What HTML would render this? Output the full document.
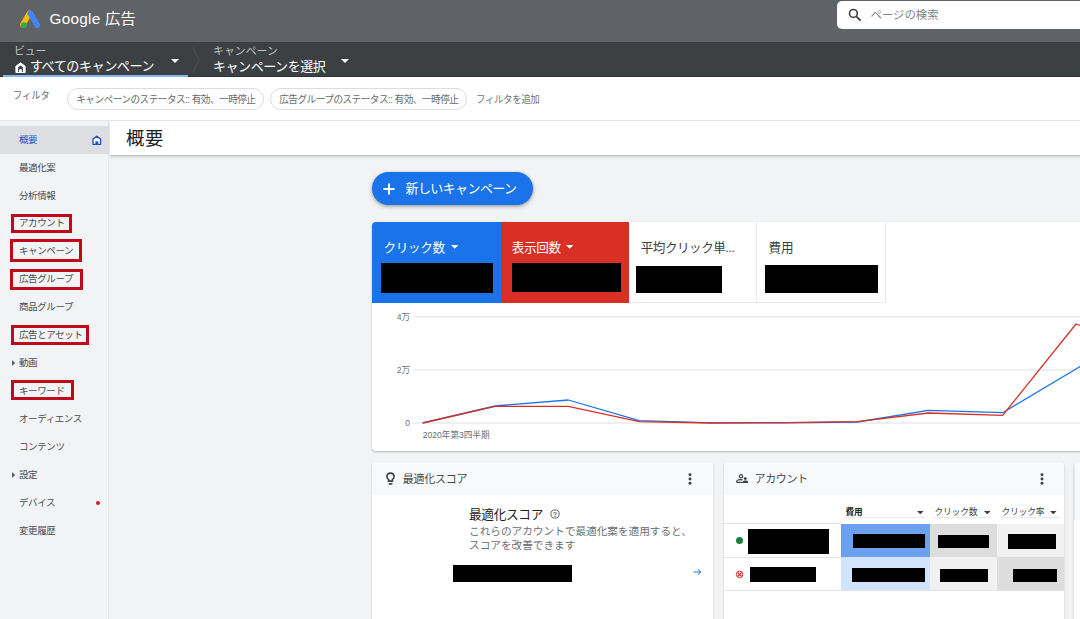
<!DOCTYPE html>
<html lang="ja"><head><meta charset="utf-8">
<style>
*{box-sizing:border-box;margin:0;padding:0}
html,body{width:1080px;height:619px;overflow:hidden;background:#f1f3f4}
body{font-family:"Liberation Sans","Noto Sans CJK JP",sans-serif;position:relative;color:#3c4043}
.abs{position:absolute}
#top{left:0;top:0;width:1080px;height:42px;background:#5f6368}
#nav{left:0;top:42px;width:1080px;height:35px;background:#3c4043;border-bottom:1px solid #303336}
#filter{left:0;top:77px;width:1080px;height:44px;background:#fff;border-bottom:1px solid #e3e5e7}
#side{left:0;top:121px;width:109px;height:498px;background:#f1f3f4;border-right:1px solid #e6e8ea}
#title{left:109.5px;top:121px;width:971px;height:34.3px;background:#fff;box-shadow:0 1px 0 #bfc2c5,0 2px 2px rgba(60,64,67,.18)}
.t{position:absolute;white-space:nowrap;line-height:1}
.blk{position:absolute;background:#000}
.chip{height:22px;border:1px solid #dadce0;border-radius:11px;font-size:10px;color:#666a6f;line-height:21.6px;text-align:center;white-space:nowrap;letter-spacing:-0.55px;background:#fff}
.chip span{display:inline-block;transform:scaleX(.965)}
.si{left:19px;font-size:9.5px;letter-spacing:-0.4px}
.rb{position:absolute;border:3px solid #c00a1b}
</style></head><body>
<div id="top" class="abs">
<svg class="abs" style="left:20.4px;top:9.6px" width="21" height="19.2" viewBox="0 0 23 21">
<path d="M1.2 15.2 L8.6 2.4" stroke="#fbbc04" stroke-width="6" stroke-linecap="round" transform="translate(1.8,1)"/>
<path d="M10.5 3.3 L17.9 16.1" stroke="#4285f4" stroke-width="6.4" stroke-linecap="round" transform="translate(1,0.6)"/>
<circle cx="4.3" cy="16.6" r="3.3" fill="#34a853"/>
</svg>
<div class="t" style="left:49.6px;top:11.3px;font-size:15.3px;color:#fff;letter-spacing:0.25px">Google 広告</div>
<div class="abs" style="left:837px;top:1.4px;width:260px;height:27.8px;background:#fff;border-radius:5px"></div>
<svg class="abs" style="left:848px;top:8px" width="14" height="14" viewBox="0 0 14 14"><circle cx="5.4" cy="5.4" r="3.9" fill="none" stroke="#3c4043" stroke-width="1.6"/><path d="M8.3 8.3 L12.6 12.6" stroke="#3c4043" stroke-width="1.8"/></svg>
<div class="t" style="left:870.5px;top:10px;font-size:11.4px;color:#80868b">ページの検索</div>
</div>
<div id="nav" class="abs">
<div class="t" style="left:14px;top:3.7px;font-size:10.9px;color:#bdc1c6;letter-spacing:-0.1px">ビュー</div>
<svg class="abs" style="left:15.3px;top:20px" width="11" height="11.4" viewBox="0 0 11 11.4"><path d="M0.9 10.6 V4.2 L5.5 0.8 L10.1 4.2 V10.6 Z" fill="#fff" stroke="#fff" stroke-width="1" stroke-linejoin="round"/><path d="M3.1 10 V5.3 L5.5 3.5 L7.9 5.3 V10 H6.9 V7.2 H4.1 V10Z" fill="#3c4043"/></svg>
<div class="t" style="left:29.9px;top:18.2px;font-size:13.1px;color:#fff;letter-spacing:-0.47px">すべてのキャンペーン</div>
<div class="abs" style="left:170.6px;top:16.7px;border:4px solid transparent;border-top:4px solid #fff;border-bottom:0"></div>
<div class="abs" style="left:3px;top:32.5px;width:185px;height:2.5px;background:#8ab4f8"></div>
<svg class="abs" style="left:192px;top:4px" width="10" height="28" viewBox="0 0 10 28"><path d="M1 1 L7 14 L1 27" fill="none" stroke="#4a4e52" stroke-width="1"/></svg>
<div class="t" style="left:213px;top:3.6px;font-size:10.9px;color:#bdc1c6">キャンペーン</div>
<div class="t" style="left:213px;top:18.2px;font-size:13px;color:#fff;letter-spacing:-0.45px">キャンペーンを選択</div>
<div class="abs" style="left:340.6px;top:16.7px;border:4px solid transparent;border-top:4px solid #fff;border-bottom:0"></div>
</div>
<div id="filter" class="abs">
<div class="t" style="left:13.2px;top:14px;font-size:10.3px;color:#686c71;transform:scaleX(.9);transform-origin:0 0">フィルタ</div>
<div class="abs chip" style="left:67px;top:11px;width:197px"><span>キャンペーンのステータス:: 有効、一時停止</span></div>
<div class="abs chip" style="left:270px;top:11px;width:197px"><span>広告グループのステータス:: 有効、一時停止</span></div>
<div class="t" style="left:476.4px;top:18.4px;font-size:10px;color:#70757a;letter-spacing:-0.5px;transform:scaleX(.957);transform-origin:0 0">フィルタを追加</div>
</div>
<div id="side" class="abs">
<div class="abs" style="left:0;top:5px;width:109px;height:27.6px;background:#dcdee1"></div>
<div class="t si" style="top:13.5px;color:#1a56c4">概要</div>
<div class="t si" style="top:41.5px;color:#484c50">最適化案</div>
<div class="t si" style="top:69.5px;color:#484c50">分析情報</div>
<div class="t si" style="top:97.2px;color:#484c50">アカウント</div>
<div class="t si" style="top:124.7px;color:#484c50">キャンペーン</div>
<div class="t si" style="top:152.7px;color:#484c50">広告グループ</div>
<div class="t si" style="top:180.5px;color:#484c50">商品グループ</div>
<div class="t si" style="top:208.5px;color:#484c50">広告とアセット</div>
<div class="t si" style="top:236.9px;color:#484c50">動画</div>
<div class="t si" style="top:264.6px;color:#484c50">キーワード</div>
<div class="t si" style="top:293.3px;color:#484c50">オーディエンス</div>
<div class="t si" style="top:321.4px;color:#484c50">コンテンツ</div>
<div class="t si" style="top:349.0px;color:#484c50">設定</div>
<div class="t si" style="top:377.1px;color:#484c50">デバイス</div>
<div class="t si" style="top:404.7px;color:#484c50">変更履歴</div>
<svg class="abs" style="left:91.6px;top:13.9px" width="10" height="10.4" viewBox="0 0 10 10.4"><path d="M1 9.5 V4.1 L4.8 1.2 L8.6 4.1 V9.5 Z" fill="#f4f7fe" stroke="#1c4fc0" stroke-width="1.3" stroke-linejoin="round"/><rect x="3.4" y="6.4" width="2.8" height="3.4" fill="#1c4fc0"/></svg>
<svg class="abs" style="left:11.6px;top:239.4px" width="3.2" height="6" viewBox="0 0 3.2 6"><path d="M0 0L3.2 3L0 6Z" fill="#5f6368"/></svg>
<svg class="abs" style="left:11.6px;top:351.2px" width="3.2" height="6" viewBox="0 0 3.2 6"><path d="M0 0L3.2 3L0 6Z" fill="#5f6368"/></svg>
<div class="abs" style="left:96px;top:379.5px;width:4px;height:4px;border-radius:2px;background:#d01c1c"></div>
<div class="rb" style="left:11px;top:93.0px;width:61.0px;height:18.6px"></div>
<div class="rb" style="left:10.2px;top:118.3px;width:71.5px;height:22.8px"></div>
<div class="rb" style="left:10.2px;top:148.0px;width:72.7px;height:20.7px"></div>
<div class="rb" style="left:11px;top:203.9px;width:77.8px;height:19.8px"></div>
<div class="rb" style="left:11px;top:259.2px;width:62.7px;height:19.8px"></div>
</div>
<div id="title" class="abs"><div class="t" style="left:16.4px;top:8.6px;font-size:18.4px;color:#202124;letter-spacing:0.7px">概要</div></div>
<!--MAIN-->
<div class="abs" style="left:372.4px;top:172px;width:160.8px;height:33px;border-radius:17px;background:#1a73e8;box-shadow:0 1px 3px rgba(60,64,67,.4),0 2px 5px rgba(60,64,67,.2)"></div>
<svg class="abs" style="left:383px;top:183px" width="12" height="12" viewBox="0 0 12 12"><path d="M6 0.4V11.6M0.4 6H11.6" stroke="#fff" stroke-width="2"/></svg>
<div class="t" style="left:405.5px;top:182px;font-size:13px;color:#fff;letter-spacing:-0.6px">新しいキャンペーン</div>
<div class="abs" style="left:372.4px;top:222px;width:720px;height:229px;background:#fff;border-radius:4px;box-shadow:0 1px 2px rgba(60,64,67,.35);overflow:hidden">
<div class="abs" style="left:0;top:0;width:128.4px;height:80.6px;background:#1a73e8"></div>
<div class="abs" style="left:128.4px;top:0;width:128.3px;height:80.6px;background:#d93025"></div>
<div class="abs" style="left:256.7px;top:0;width:128px;height:80.6px;border-right:1px solid #e8eaed;border-bottom:1px solid #e8eaed"></div>
<div class="abs" style="left:384.7px;top:0;width:128.5px;height:80.6px;border-right:1px solid #e8eaed;border-bottom:1px solid #e8eaed"></div>
</div>
<div class="t" style="left:383.4px;top:241.8px;font-size:12.6px;color:#fff;letter-spacing:-0.3px">クリック数</div>
<svg class="abs" style="left:450.7px;top:245.3px" width="7.4" height="3.7" viewBox="0 0 7.4 3.7"><path d="M0 0H7.4L3.7 3.7Z" fill="#fff"/></svg>
<div class="t" style="left:511.7px;top:241.8px;font-size:12.6px;color:#fff;letter-spacing:-0.3px">表示回数</div>
<svg class="abs" style="left:566.2px;top:245.3px" width="7.4" height="3.7" viewBox="0 0 7.4 3.7"><path d="M0 0H7.4L3.7 3.7Z" fill="#fff"/></svg>
<div class="t" style="left:640.7px;top:241.8px;font-size:12.6px;color:#3c4043;letter-spacing:-0.5px">平均クリック単...</div>
<div class="t" style="left:768.6px;top:241.8px;font-size:12.6px;color:#3c4043;letter-spacing:-0.3px">費用</div>
<div class="blk" style="left:381.3px;top:262.9px;width:111.7px;height:30.4px"></div>
<div class="blk" style="left:511.7px;top:262.9px;width:109.4px;height:28.8px"></div>
<div class="blk" style="left:636.0px;top:266.3px;width:85.6px;height:26.4px"></div>
<div class="blk" style="left:764.7px;top:265.2px;width:113.3px;height:27.5px"></div>
<svg class="abs" style="left:372px;top:303px" width="708" height="147" viewBox="372 303 708 147">
<g stroke="#dddfe1" stroke-width="1"><path d="M413.3 316.8H1080M413.3 370H1080M413.3 423H1080"/></g>
<g font-family="'Liberation Sans','Noto Sans CJK JP',sans-serif" font-size="8.6" fill="#6a6e73">
<text x="410" y="320" text-anchor="end">4万</text><text x="410" y="373.2" text-anchor="end">2万</text><text x="410" y="426.2" text-anchor="end">0</text>
<text x="422.7" y="437.8" letter-spacing="0">2020年第3四半期</text></g>
<polyline fill="none" stroke="#1a73e8" stroke-width="1.3" stroke-linejoin="round" points="422.7,423 495,406 568.3,400 639.3,420.7 712,422.8 784.5,422.8 857.3,422 928.3,410.3 1002.7,412.7 1076,369 1082,365.4"/>
<polyline fill="none" stroke="#d93025" stroke-width="1.3" stroke-linejoin="round" points="422.7,423 495,406.3 568.3,406.3 639.3,421.7 712,423 784.5,422.6 857.3,421.7 928.3,413 1002.7,415.3 1076,324 1082,326"/>
</svg>
<div class="abs" style="left:372.4px;top:462.4px;width:340.8px;height:170px;background:#fff;border-radius:4px;box-shadow:0 1px 2px rgba(60,64,67,.3);overflow:hidden"><div class="abs" style="left:0;top:0;width:340px;height:32.9px;background:#f8f9fa"></div></div>
<svg class="abs" style="left:386.2px;top:472.3px" width="9" height="14" viewBox="0 0 9 14"><path d="M4.5 1.1 a3.4 3.4 0 0 1 1.9 6.3 V9.1 H2.6 V7.4 a3.4 3.4 0 0 1 1.9 -6.3 Z" fill="none" stroke="#3c4043" stroke-width="1.6"/><path d="M2.6 11.9H6.4" stroke="#3c4043" stroke-width="1.6"/></svg>
<div class="t" style="left:402.7px;top:474.3px;font-size:11px;color:#45494d;letter-spacing:-0.25px">最適化スコア</div>
<svg class="abs" style="left:688px;top:473px" width="4" height="12" viewBox="0 0 4 12"><circle cx="2" cy="1.8" r="1.45" fill="#3c4043"/><circle cx="2" cy="6" r="1.45" fill="#3c4043"/><circle cx="2" cy="10.2" r="1.45" fill="#3c4043"/></svg>
<div class="t" style="left:469px;top:508.7px;font-size:12.7px;color:#202124;letter-spacing:-0.35px">最適化スコア</div>
<svg class="abs" style="left:549.6px;top:509.4px" width="10" height="10" viewBox="0 0 10 10"><circle cx="5" cy="5" r="4.1" fill="none" stroke="#5f6368" stroke-width="1"/><text x="5" y="7.5" font-size="7" text-anchor="middle" fill="#5f6368" font-family="'Liberation Sans',sans-serif" font-weight="bold">?</text></svg>
<div class="abs" style="left:469px;top:524px;font-size:10.7px;line-height:14px;color:#6b6f74;white-space:nowrap;letter-spacing:-0.05px">これらのアカウントで最適化案を適用すると、<br>スコアを改善できます</div>
<div class="blk" style="left:453.0px;top:564.7px;width:118.7px;height:17.2px"></div>
<svg class="abs" style="left:693px;top:567.6px" width="9" height="8" viewBox="0 0 9 8"><path d="M0.5 4H7.6M4.8 1.2L7.8 4L4.8 6.8" fill="none" stroke="#1a73e8" stroke-width="1"/></svg>
<div class="abs" style="left:724px;top:462.4px;width:340.4px;height:170px;background:#fff;border-radius:4px;box-shadow:0 1px 2px rgba(60,64,67,.3);overflow:hidden"><div class="abs" style="left:-0.8px;top:0;width:342px;height:170px"><div class="abs" style="left:0;top:0;width:342px;height:32.9px;background:#f8f9fa"></div>
<div class="abs" style="left:118.0px;top:61.6px;width:88.8px;height:33.4px;background:#6ba1ee"></div><div class="abs" style="left:118.0px;top:95px;width:88.8px;height:32.9px;background:#d2e3fc"></div>
<div class="abs" style="left:206.8px;top:61.6px;width:67.3px;height:33.4px;background:#dddddd"></div><div class="abs" style="left:206.8px;top:95px;width:67.3px;height:32.9px;background:#f1f1f1"></div>
<div class="abs" style="left:274.1px;top:61.6px;width:67.1px;height:33.4px;background:#f1f1f1"></div><div class="abs" style="left:274.1px;top:95px;width:67.1px;height:32.9px;background:#dddddd"></div>
<div class="abs" style="left:0;top:60.5px;width:118px;height:1px;background:#e4e4e4"></div><div class="abs" style="left:0;top:94.2px;width:118px;height:1px;background:#e4e4e4"></div><div class="abs" style="left:0;top:127.4px;width:342px;height:1px;background:#e4e4e4"></div>
</div></div>
<svg class="abs" style="left:735.9px;top:474.3px" width="12.4" height="9.2" viewBox="0 0 12.4 9.2"><circle cx="5" cy="2.3" r="1.65" fill="none" stroke="#3c4043" stroke-width="1.15"/><path d="M0.7 8.4 V7.6 C0.7 6.2 3 5.6 4.6 5.6 C5.3 5.6 6 5.7 6.6 5.9 M0.7 8.4 H6.6" fill="none" stroke="#3c4043" stroke-width="1.15"/><circle cx="9.3" cy="4.6" r="1.45" fill="#3c4043"/><path d="M6.6 9 V8 C6.6 6.9 8.2 6.4 9.4 6.4 S12.2 6.9 12.2 8 V9 Z" fill="#3c4043"/></svg>
<div class="t" style="left:754.5px;top:474.3px;font-size:11px;color:#45494d;letter-spacing:-0.35px">アカウント</div>
<svg class="abs" style="left:1039.8px;top:473px" width="4" height="12" viewBox="0 0 4 12"><circle cx="2" cy="1.8" r="1.45" fill="#3c4043"/><circle cx="2" cy="6" r="1.45" fill="#3c4043"/><circle cx="2" cy="10.2" r="1.45" fill="#3c4043"/></svg>
<div class="t" style="left:845.4px;top:507.5px;font-size:8.6px;color:#202124;font-weight:bold">費用</div>
<div class="t" style="left:934.5px;top:507.5px;font-size:8.8px;color:#3c4043;letter-spacing:-0.25px">クリック数</div>
<div class="t" style="left:1001.5px;top:507.5px;font-size:8.8px;color:#3c4043;letter-spacing:-0.25px">クリック率</div>
<svg class="abs" style="left:917.2px;top:510.6px" width="6.6" height="3.4" viewBox="0 0 6.6 3.4"><path d="M0 0H6.6L3.3 3.4Z" fill="#3c4043"/></svg><svg class="abs" style="left:983.6px;top:510.6px" width="6.6" height="3.4" viewBox="0 0 6.6 3.4"><path d="M0 0H6.6L3.3 3.4Z" fill="#3c4043"/></svg><svg class="abs" style="left:1050.2px;top:510.6px" width="6.6" height="3.4" viewBox="0 0 6.6 3.4"><path d="M0 0H6.6L3.3 3.4Z" fill="#3c4043"/></svg>
<div class="abs" style="left:845px;top:517.2px;width:80px;height:1px;background:#e6e8ea"></div><div class="abs" style="left:934px;top:517.2px;width:58px;height:1px;background:#e6e8ea"></div><div class="abs" style="left:1001px;top:517.2px;width:58px;height:1px;background:#e6e8ea"></div>
<div class="abs" style="left:735.7px;top:536.9px;width:7.4px;height:7.4px;border-radius:50%;background:#188038"></div>
<svg class="abs" style="left:735px;top:569.6px" width="9" height="9" viewBox="0 0 9 9"><circle cx="4.6" cy="4.4" r="3.25" fill="none" stroke="#d93025" stroke-width="1"/><path d="M2.5 2.3L6.7 6.5M6.7 2.3L2.5 6.5" stroke="#d93025" stroke-width="1.1"/></svg>
<div class="blk" style="left:747.8px;top:529.2px;width:80.9px;height:24.7px"></div>
<div class="blk" style="left:749.7px;top:566.9px;width:66.3px;height:14.8px"></div>
<div class="blk" style="left:852.6px;top:534.0px;width:72.1px;height:13.8px"></div>
<div class="blk" style="left:937.9px;top:534.5px;width:50.9px;height:13.3px"></div>
<div class="blk" style="left:1007.9px;top:533.7px;width:47.7px;height:15.4px"></div>
<div class="blk" style="left:851.8px;top:567.7px;width:72.9px;height:14.0px"></div>
<div class="blk" style="left:940.3px;top:568.5px;width:47.7px;height:13.0px"></div>
<div class="blk" style="left:1013.2px;top:568.5px;width:43.8px;height:13.8px"></div>
<div class="abs" style="left:1073.6px;top:462.4px;width:40px;height:170px;background:#fff;border-radius:4px;box-shadow:0 1px 2px rgba(60,64,67,.3);overflow:hidden"><div class="abs" style="left:0;top:0;width:40px;height:58px;background:#f8f9fa;border-left:1px solid #e6e8ea"></div></div>
</body></html>
